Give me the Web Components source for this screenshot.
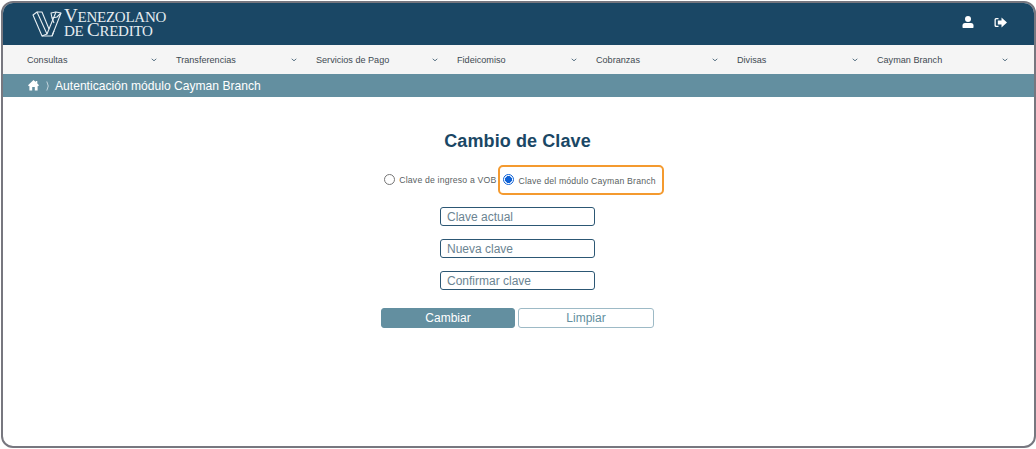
<!DOCTYPE html>
<html>
<head>
<meta charset="utf-8">
<style>
html, body { margin: 0; height: 100%; background: #fff; }
body { font-family: "Liberation Sans", Arial, sans-serif; }
</style>
<script>
// top bar with logo and the two icons
class VcHeader extends HTMLElement {
  constructor() {
    super();
    this.attachShadow({mode: 'open'}).innerHTML = `
<style>
:host { display: flex; align-items: center; justify-content: space-between; height: 42px; background: #1a4765; color: #fff; padding: 0 27px 0 28px; box-sizing: border-box; }
.logo { display: flex; align-items: center; gap: 2px; margin-top: -3px; }
.logo svg { margin-top: 2px; }
.name { font-family: "Liberation Serif", serif; font-size: 15px; letter-spacing: -.25px; color: #e6edf1; }
.name div { height: 14px; line-height: 14px; white-space: nowrap; }
.name b { font-weight: normal; font-size: 19px; }
.icons { display: flex; gap: 20px; align-items: center; margin-top: -4px; }
svg { display: block; }
</style>
<div class="logo">
  <svg width="31" height="30" viewBox="0 0 31 30" fill="none" stroke="#e6edf1" stroke-width="1.1" stroke-linejoin="round">
    <path d="M2 6 L6 3 L16 25 L11 27 Z"/>
    <path d="M6 3 L11 3 L18 20 L16 25"/>
    <path d="M11 27 L21 27 L30 4 L25 3 L18 20"/>
    <path d="M25 3 L20 4 L21 9 M30 4 L26 8 L21 9 L23 14"/>
    <path d="M21 27 L23 22"/>
  </svg>
  <div class="name"><div><b>V</b>ENEZOLANO</div><div>DE <b>C</b>REDITO</div></div>
</div>
<div class="icons">
  <svg width="12" height="12" viewBox="0 0 12 12" fill="#fff"><circle cx="6" cy="3" r="3"/><path d="M1 12 Q0.500 12 .5 11 V9.500 Q.5 7 3 7 H9 Q11.500 7 11.500 9.500 V11 Q11.500 12 11 12 Z"/></svg>
  <svg width="13" height="11" viewBox="0 0 13 11" fill="#fff"><path d="M4.500 1 H2 Q.5 1 .5 2.500 V8.500 Q.5 10 2 10 H4.500 V8.700 H2.500 Q1.800 8.700 1.800 8 V3 Q1.800 2.300 2.500 2.300 H4.500 Z"/><path d="M7.500 .5 L13 5.500 L7.500 10.500 V7.500 H3.800 V3.500 H7.500 Z"/></svg>
</div>`;
  }
}
customElements.define('vc-header', VcHeader);

// one menu cell, label in the slot
class VcMenuItem extends HTMLElement {
  constructor() {
    super();
    this.attachShadow({mode: 'open'}).innerHTML = `
<style>
:host { display: flex; align-items: center; justify-content: space-between; font-size: 9.1px; color: #3f4a52; padding-right: 19px; }
svg { display: block; margin-top: 1px; }
</style>
<slot></slot>
<svg width="6" height="4" viewBox="0 0 6 4" fill="none" stroke="#5b7486" stroke-width="1"><path d="M.7 .8 L3 2.800 L5.300 .8"/></svg>`;
  }
}
customElements.define('vc-menu-item', VcMenuItem);

class VcMenu extends HTMLElement {
  constructor() {
    super();
    this.attachShadow({mode: 'open'}).innerHTML = `
<style>
:host { display: grid; grid-template-columns: 149px 140px 141px 139px 141px 140px 1fr; height: 29px; background: #f5f5f5; padding: 0 7px 0 24px; box-sizing: border-box; }
</style>
<slot></slot>`;
  }
}
customElements.define('vc-menu', VcMenu);

class VcCrumb extends HTMLElement {
  constructor() {
    super();
    this.attachShadow({mode: 'open'}).innerHTML = `
<style>
:host { display: flex; align-items: center; height: 23px; background: #638fa0; color: #fff; font-size: 12.1px; padding-left: 25px; box-sizing: border-box; }
svg { display: block; }
.sep { margin: 0 5px 0 7px; }
</style>
<svg width="11" height="11" viewBox="0 0 11 11" fill="#fff"><path d="M5.500 0 L7.800 2.100 V1 H9.300 V3.500 L11 5.200 L10 6.200 L9.600 5.900 V10.500 H6.800 V7 H4.200 V10.500 H1.400 V5.900 L1 6.200 L0 5.200 Z"/></svg>
<svg class="sep" width="4" height="10" viewBox="0 0 4 10" fill="none" stroke="#cfdde3" stroke-width=".9"><path d="M.8 .5 Q3.700 5 .8 9.500"/></svg>
<slot></slot>`;
  }
}
customElements.define('vc-crumb', VcCrumb);

class VcRadio extends HTMLElement {
  constructor() {
    super();
    const on = this.hasAttribute('checked');
    this.attachShadow({mode: 'open'}).innerHTML = `
<style>
:host { display: inline-flex; align-items: center; gap: 4px; font-size: 8.7px; color: #5a5f63; letter-spacing: .18px; }
.dot { width: 11px; height: 11px; border-radius: 50%; box-sizing: border-box; border: 1px solid #767676; background: #fff; margin-top: -2px; }
.dot.on { border-color: #0f62d6; background: radial-gradient(circle, #0f62d6 3.2px, #fff 3.7px); }
</style>
<span class="dot ${on ? 'on' : ''}"></span><slot></slot>`;
  }
}
customElements.define('vc-radio', VcRadio);

class VcField extends HTMLElement {
  constructor() {
    super();
    const label = this.getAttribute('placeholder');
    this.attachShadow({mode: 'open'}).innerHTML = `
<style>
:host { display: block; width: 155px; height: 19px; }
input { display: block; width: 100%; height: 100%; box-sizing: border-box; border: 1px solid #2c5774; border-radius: 3px; padding: 0 0 0 6px; font: 12px "Liberation Sans", Arial, sans-serif; background: #fff; outline: none; }
input::placeholder { color: #6b8492; opacity: 1; }
</style>
<input type="text" placeholder="${label}">`;
  }
}
customElements.define('vc-field', VcField);

class VcButton extends HTMLElement {
  constructor() {
    super();
    this.attachShadow({mode: 'open'}).innerHTML = `
<style>
:host { display: flex; align-items: center; justify-content: center; box-sizing: border-box; height: 20px; border-radius: 3px; font-size: 12px; border: 1px solid #638fa0; background: #638fa0; color: #fff; }
:host([outline]) { background: #fff; color: #638fa0; border-color: #9dbac6; }
</style>
<slot></slot>`;
  }
}
customElements.define('vc-button', VcButton);

class VcForm extends HTMLElement {
  constructor() {
    super();
    this.attachShadow({mode: 'open'}).innerHTML = `
<style>
:host { display: flex; flex-direction: column; align-items: center; padding: 34px 2px 0 0; }
h1 { margin: 0; font-size: 18px; line-height: 21px; font-weight: bold; color: #1a4765; letter-spacing: .1px; }
.radios { display: flex; align-items: center; gap: 2px; margin: 13px 0 0 13px; }
.mark { display: block; border: 2px solid #f49a2f; border-radius: 5px; padding: 4px 6px 4px 3px; }
.fields { display: flex; flex-direction: column; gap: 13px; margin-top: 12px; }
.buttons { display: grid; grid-template-columns: 134px 136px; gap: 3px; margin-top: 18px; }
</style>
<h1>Cambio de Clave</h1>
<div class="radios">
  <vc-radio>Clave de ingreso a VOB</vc-radio>
  <span class="mark"><vc-radio checked>Clave del módulo Cayman Branch</vc-radio></span>
</div>
<div class="fields">
  <vc-field placeholder="Clave actual"></vc-field>
  <vc-field placeholder="Nueva clave"></vc-field>
  <vc-field placeholder="Confirmar clave"></vc-field>
</div>
<div class="buttons">
  <vc-button>Cambiar</vc-button>
  <vc-button outline>Limpiar</vc-button>
</div>`;
  }
}
customElements.define('vc-form', VcForm);

// rounded grey frame round the whole capture
class VcFrame extends HTMLElement {
  constructor() {
    super();
    this.attachShadow({mode: 'open'}).innerHTML = `
<style>
:host { display: block; box-sizing: border-box; width: 1035px; height: 447px; border: 2px solid #77777f; border-radius: 12px; overflow: hidden; margin: 1px 0 0 1px; background: #fff; }
</style>
<slot></slot>`;
  }
}
customElements.define('vc-frame', VcFrame);
</script>
</head>
<body>
<vc-frame>
  <vc-header></vc-header>
  <vc-menu>
    <vc-menu-item>Consultas</vc-menu-item>
    <vc-menu-item>Transferencias</vc-menu-item>
    <vc-menu-item>Servicios de Pago</vc-menu-item>
    <vc-menu-item>Fideicomiso</vc-menu-item>
    <vc-menu-item>Cobranzas</vc-menu-item>
    <vc-menu-item>Divisas</vc-menu-item>
    <vc-menu-item>Cayman Branch</vc-menu-item>
  </vc-menu>
  <vc-crumb>Autenticación módulo Cayman Branch</vc-crumb>
  <vc-form></vc-form>
</vc-frame>
</body>
</html>
